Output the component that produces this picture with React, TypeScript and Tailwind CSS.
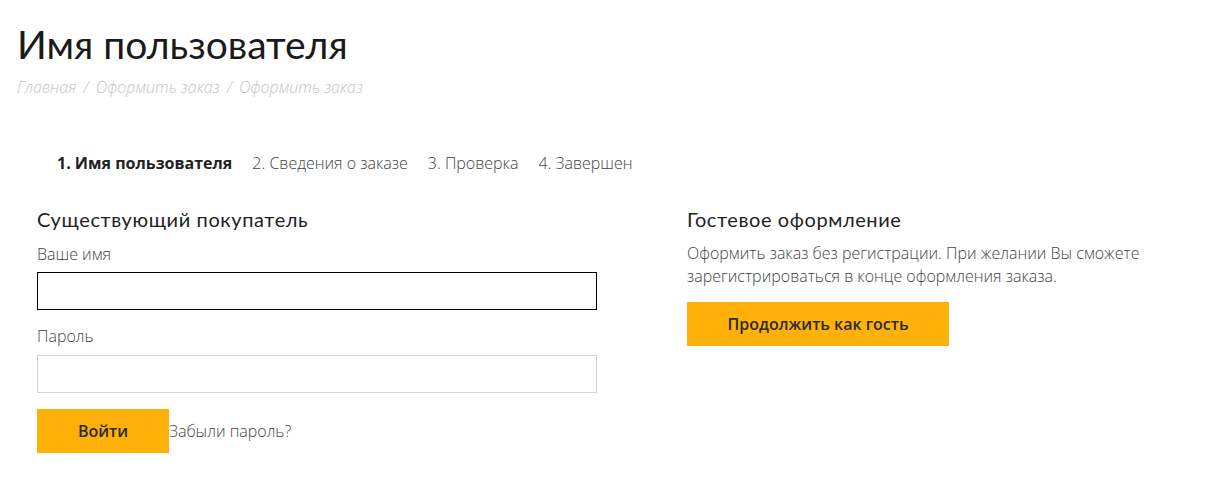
import React from "react";

const heading = { fontFamily: "Lato, 'Noto Sans', sans-serif" };

export default function App() {
  return (
    <div className="min-h-[490px] bg-white text-[#222] font-['Open_Sans',sans-serif]">
      <div className="px-[17px] pt-[22px]">
        <h1 style={heading} className="text-[39px] leading-[44px] font-normal text-[#1a1a1a]">
          Имя пользователя
        </h1>
        <div className="mt-[10px] text-[16px] italic font-light text-[#c4c4c4] leading-[22px]">
          Главная <span className="mx-[3px]">/</span> Оформить заказ <span className="mx-[3px]">/</span> Оформить заказ
        </div>
        <div className="mt-[54px] pl-[40px] flex gap-[20px] text-[16px] leading-[22px]">
          <span className="font-bold text-[#222]">1. Имя пользователя</span>
          <span className="font-light text-[#444]">2. Сведения о заказе</span>
          <span className="font-light text-[#444]">3. Проверка</span>
          <span className="font-light text-[#444]">4. Завершен</span>
        </div>
      </div>
      <div className="pl-[37px] mt-[33px] grid grid-cols-[650px_1fr]">
        <div className="w-[560px]">
          <h2 style={heading} className="text-[20px] leading-[24px] tracking-[0.6px] text-[#222]">Существующий покупатель</h2>
          <div className="mt-[12px] text-[16px] font-light text-[#444] leading-[22px]">Ваше имя</div>
          <div className="mt-[7px] h-[38px] border border-black bg-white"></div>
          <div className="mt-[15px] text-[16px] font-light text-[#444] leading-[22px]">Пароль</div>
          <div className="mt-[8px] h-[38px] border border-[#d4d4d4] bg-white"></div>
          <div className="mt-[16px] flex items-center">
            <button className="w-[132px] h-[44px] bg-[#ffb10a] text-[16px] font-semibold text-[#2a2a2a]">Войти</button>
            <span className="text-[16px] font-light text-[#444]">Забыли пароль?</span>
          </div>
        </div>
        <div className="w-[480px]">
          <h2 style={heading} className="text-[20px] leading-[24px] tracking-[0.6px] text-[#222]">Гостевое оформление</h2>
          <p className="mt-[11px] text-[16px] font-light text-[#444] leading-[23px]">
            Оформить заказ без регистрации. При желании Вы сможете зарегистрироваться в конце оформления заказа.
          </p>
          <button className="mt-[14px] w-[262px] h-[44px] bg-[#ffb10a] text-[16px] font-semibold text-[#2a2a2a]">
            Продолжить как гость
          </button>
        </div>
      </div>
    </div>
  );
}
